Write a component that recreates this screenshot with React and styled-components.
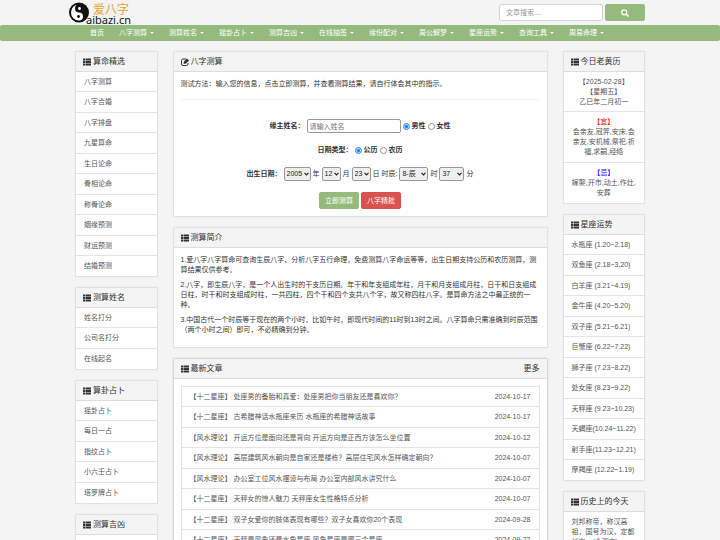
import React from 'react';
import styled, { createGlobalStyle } from 'styled-components';

const GlobalStyle = createGlobalStyle`
* {
  box-sizing: border-box;
}
body {
  margin: 0;
  background: #f4f4f4;
  color: #333;
  font-family: "Liberation Sans", "Noto Sans CJK SC", sans-serif;
  font-size: 7px;
  line-height: 10px;
}
a {
  color: inherit;
  text-decoration: none;
}
ul {
  margin: 0;
  padding: 0;
  list-style: none;
}
input, select, button {
  margin: 0;
  font: inherit;
  color: inherit;
}
`

const Container = styled.div`
  max-width: 570px;
  margin: 0 auto;
`

const TopBar = styled(Container)`
  display: flex;
  align-items: flex-start;
  justify-content: space-between;
  height: 25px;
`

const Logo = styled.a`
  display: block;
  margin-left: -8px;
  svg {
    display: block;
    overflow: visible;
  }
`

const Search = styled.form`
  display: grid;
  grid-template-columns: 104px 40px;
  gap: 2px;
  padding-top: 4px;
`

const SearchInput = styled.input`
  width: 100%;
  height: 17px;
  padding: 0 6px;
  border: 1px solid #d4d4d4;
  border-radius: 2px;
  background: #fff;
  &::placeholder {
    color: #999;
  }
`

const Button = styled.button`
  display: inline-flex;
  align-items: center;
  justify-content: center;
  width: 40px;
  height: 17px;
  padding: 0;
  border: 1px solid ${props => props.$danger ? '#d6504c' : '#94ba7d'};
  border-radius: 2px;
  background: ${props => props.$danger ? '#d9534f' : '#94ba7d'};
  color: #fff;
`

const Nav = styled.nav`
  background: #94ba7d;
  border-radius: 2px;
  color: #fff;
`

const Menu = styled.ul`
  display: flex;
  max-width: 570px;
  margin: 0 auto;
  padding: 0 7px;
`

const MenuLink = styled.a`
  display: flex;
  align-items: center;
  gap: 3px;
  height: 16px;
  padding: 0 7px 0 8px;
  white-space: nowrap;
`

const Caret = styled.span`
  border: 2px solid transparent;
  border-top-color: #fff;
  border-bottom: 0;
`

const Page = styled(Container)`
  display: grid;
  grid-template-columns: 11fr 50fr 11fr;
  align-items: start;
  gap: 15px;
  padding-top: 10px;
`

const Column = styled.div`
  display: grid;
  grid-template-columns: minmax(0, 1fr);
  gap: 10px;
`

const Box = styled.section`
  border: 1px solid ${props => props.$raised ? '#dadada' : '#e2e2e2'};
  border-radius: 2px;
  background: #fff;
  box-shadow: 0 0 ${props => props.$raised ? 2 : 1}px rgba(0, 0, 0, 0.15);
`

const Heading = styled.header`
  display: flex;
  align-items: center;
  gap: 2px;
  height: 20px;
  padding: 0 7px;
  border-bottom: 1px solid #ddd;
  background: #f4f4f4;
  font-size: 8px;
  h2 {
    margin: 0;
    font-size: 8px;
    font-weight: 400;
  }
  a {
    margin-left: auto;
  }
`

const Item = styled.li`
  display: flex;
  justify-content: space-between;
  padding: 5px 8px 4px;
  border-bottom: 1px solid #e4e4e4;
  color: #555;
  white-space: nowrap;
  &:nth-child(even) {
    padding-bottom: 5px;
  }
  &:last-child {
    border-bottom: 0;
    padding-bottom: 5px;
  }
`

const Note = styled(Item)`
  display: block;
  white-space: normal;
  text-align: ${props => props.$left ? 'left' : 'center'};
`

const Mark = styled.span`
  color: ${props => props.$color};
`

const Body = styled.div`
  padding: 7px;
  p {
    margin: 0 0 5px;
  }
`

const Articles = styled.ul`
  border: 1px solid #e4e4e4;
`

const Form = styled.form`
  display: grid;
  justify-items: center;
  margin-top: 10px;
  padding-top: 19px;
  border-top: 1px solid #f3f3f3;
`

const Line = styled.div`
  display: flex;
  align-items: center;
  gap: 2px;
  height: 14px;
  margin-bottom: 10px;
  white-space: nowrap;
`

const Label = styled.label`
  font-weight: 700;
`

const NameInput = styled.input`
  width: 94px;
  height: 14px;
  padding: 0 2px;
  border: 1px solid #999;
  border-radius: 2px;
  background: #fff;
  &::placeholder {
    color: #757575;
  }
`

const Radio = styled.input`
  appearance: none;
  width: 7px;
  height: 7px;
  border: 1px solid #959595;
  border-radius: 50%;
  background: #fff;
  &:checked {
    border-color: #4a9bff;
    background: #0075ff;
    box-shadow: inset 0 0 0 1px #cfe4ff;
  }
`

const Picker = styled.span`
  position: relative;
  display: block;
  width: ${props => props.$width}px;
  select {
    display: block;
    appearance: none;
    width: 100%;
    height: 14px;
    padding: 0 2px;
    border: 1px solid #999;
    border-radius: 2px;
    background: #efefef;
    color: #222;
  }
  svg {
    position: absolute;
    top: 5px;
    right: 2px;
    pointer-events: none;
  }
`

const Actions = styled.div`
  display: flex;
  gap: 2px;
  padding-top: 1px;
`

const menu = ['八字测算', '测算姓名', '摇卦占卜', '测算吉凶', '在线抽签', '缘份配对', '周公解梦', '星座运势', '查询工具', '周易命理'];

const leftLists = [
  { title: '算命精选', items: ['八字测算', '八字合婚', '八字排盘', '九星算命', '生日论命', '骨相论命', '称骨论命', '姻缘预测', '财运预测', '结婚预测'] },
  { title: '测算姓名', items: ['姓名打分', '公司名打分', '在线起名'] },
  { title: '算卦占卜', items: ['摇卦占卜', '每日一占', '指纹占卜', '小六壬占卜', '塔罗牌占卜'] },
  { title: '测算吉凶', items: ['手机号码吉凶', '车牌号码吉凶'] },
];

const signs = [
  '水瓶座 (1.20~2.18)', '双鱼座 (2.18~3.20)', '白羊座 (3.21~4.19)', '金牛座 (4.20~5.20)',
  '双子座 (5.21~6.21)', '巨蟹座 (6.22~7.22)', '狮子座 (7.23~8.22)', '处女座 (8.23~9.22)',
  '天秤座 (9.23~10.23)', '天蝎座(10.24~11.22)', '射手座(11.23~12.21)', '摩羯座 (12.22~1.19)',
];

const articles = [
  ['【十二星座】 处座男的备胎和真爱：处座男把你当朋友还是喜欢你？', '2024-10-17'],
  ['【十二星座】 古希腊神话水瓶座来历 水瓶座的希腊神话故事', '2024-10-17'],
  ['【风水理论】 开运方位是面向还是背向 开运方向是正西方该怎么坐位置', '2024-10-12'],
  ['【风水理论】 高层建筑风水朝向是自家还是楼栋？高层住宅风水怎样确定朝向？', '2024-10-07'],
  ['【风水理论】 办公室工位风水摆设与布局 办公室内部风水讲究什么', '2024-10-07'],
  ['【十二星座】 天秤女的惊人魅力 天秤座女生性格特点分析', '2024-10-07'],
  ['【十二星座】 双子女爱你的肢体表现有哪些？双子女喜欢你20个表现', '2024-09-28'],
  ['【十二星座】 天秤是风象还是水象星座 风象星座是哪三个星座', '2024-09-22'],
];

const ListIcon = () => (
  <svg width="8" height="8" viewBox="0 0 16 16" fill="currentColor" aria-hidden="true">
    <path d="M0 1h4v4H0zM5 1h11v4H5zM0 6h4v4H0zM5 6h11v4H5zM0 11h4v4H0zM5 11h11v4H5z" />
  </svg>
);

const EditIcon = () => (
  <svg width="8" height="8" viewBox="0 0 16 16" fill="none" stroke="currentColor" strokeWidth="2" aria-hidden="true">
    <path d="M10 2H4a3 3 0 0 0-3 3v7a3 3 0 0 0 3 3h7a3 3 0 0 0 3-3v-2" />
    <path d="M5 12l1-5 6-6 4 4-6 6z" fill="currentColor" stroke="none" />
  </svg>
);

const SearchIcon = () => (
  <svg width="8" height="8" viewBox="0 0 16 16" fill="none" stroke="currentColor" strokeWidth="2.500" aria-hidden="true">
    <circle cx="6.500" cy="6.500" r="5" />
    <path d="M10 10l5 5" strokeWidth="3.500" />
  </svg>
);

const LogoMark = () => (
  <svg width="66" height="25" viewBox="0 0 66 25">
    <circle cx="12" cy="12.500" r="10" fill="#111" />
    <path d="M12 4.500a8 8 0 0 0 0 16a4 4 0 0 0 0-8a4 4 0 0 1 0-8z" fill="#fff" />
    <circle cx="12.500" cy="8.500" r="1.400" fill="#fff" />
    <circle cx="11.500" cy="16.500" r="1.400" fill="#111" />
    <text x="26" y="14" fontSize="12" fill="#e3a32b" fontFamily="'Noto Sans CJK SC', sans-serif">爱八字</text>
    <text x="19" y="24" fontSize="11" fill="#111" fontFamily="'Noto Sans', sans-serif">aibazi.cn</text>
  </svg>
);

const Panel = ({ title, icon, more, raised, children }) => (
  <Box $raised={raised}>
    <Heading>
      {icon || <ListIcon />}
      <h2>{title}</h2>
      {more && <a href="#more">{more}</a>}
    </Heading>
    {children}
  </Box>
);

const LinkPanel = ({ title, items }) => (
  <Panel title={title}>
    <ul>
      {items.map(item => <Item key={item}><a href="#item">{item}</a></Item>)}
    </ul>
  </Panel>
);

const Select = ({ label, value, width }) => (
  <Picker $width={width}>
    <select aria-label={label} defaultValue={value}>
      <option>{value}</option>
    </select>
    <svg width="5" height="4" viewBox="0 0 5 4" fill="none" stroke="#222" strokeWidth="1.200">
      <path d="M.5 .8l2 2 2-2" />
    </svg>
  </Picker>
);

const BirthForm = () => (
  <Form onSubmit={e => e.preventDefault()}>
    <Line>
      <Label htmlFor="name">缘主姓名：</Label>
      <NameInput id="name" type="text" placeholder="请输入姓名" />
      <Radio id="male" type="radio" name="sex" defaultChecked />
      <Label htmlFor="male">男性</Label>
      <Radio id="female" type="radio" name="sex" />
      <Label htmlFor="female">女性</Label>
    </Line>
    <Line>
      <Label as="span">日期类型：</Label>
      <Radio id="solar" type="radio" name="calendar" defaultChecked />
      <Label htmlFor="solar">公历</Label>
      <Radio id="lunar" type="radio" name="calendar" />
      <Label htmlFor="lunar">农历</Label>
    </Line>
    <Line>
      <Label as="span">出生日期：</Label>
      <Select label="年" value="2005" width={27} /> 年
      <Select label="月" value="12" width={19} /> 月
      <Select label="日" value="23" width={19} /> 日 时辰:
      <Select label="时辰" value="8-辰" width={29} /> 时
      <Select label="分" value="37" width={25} /> 分
    </Line>
    <Actions>
      <Button type="submit">立即测算</Button>
      <Button type="button" $danger>八字精批</Button>
    </Actions>
  </Form>
);

export default function App() {
  return (
    <>
      <GlobalStyle />
      <TopBar as="header">
        <Logo href="#home" aria-label="爱八字"><LogoMark /></Logo>
        <Search onSubmit={e => e.preventDefault()}>
          <SearchInput type="text" aria-label="文章搜索" placeholder="文章搜索...." />
          <Button type="submit" aria-label="搜索"><SearchIcon /></Button>
        </Search>
      </TopBar>
      <Nav>
        <Menu>
          <li><MenuLink href="#home">首页</MenuLink></li>
          {menu.map(name => (
            <li key={name}><MenuLink href="#menu">{name}<Caret /></MenuLink></li>
          ))}
        </Menu>
      </Nav>
      <Page as="main">
        <Column>
          {leftLists.map(list => <LinkPanel key={list.title} {...list} />)}
        </Column>
        <Column>
          <Panel title="八字测算" icon={<EditIcon />}>
            <Body>
              测试方法：输入您的信息，点击立即测算，并查看测算结果，请自行体会其中的指示。
              <BirthForm />
            </Body>
          </Panel>
          <Panel title="测算简介">
            <Body>
              <p>1.爱八字八字算命可查询生辰八字、分析八字五行命理，免费测算八字命运等等，出生日期支持公历和农历测算，测算结果仅供参考。</p>
              <p>2.八字，即生辰八字，是一个人出生时的干支历日期。年干和年支组成年柱，月干和月支组成月柱，日干和日支组成日柱，时干和时支组成时柱，一共四柱，四个干和四个支共八个字，故又称四柱八字。是算命方法之中最正统的一种。</p>
              <p>3.中国古代一个时辰等于现在的两个小时，比如午时，即现代时间的11时到13时之间。八字算命只需准确到时辰范围（两个小时之间）即可，不必精确到分钟。</p>
            </Body>
          </Panel>
          <Panel title="最新文章" more="更多" raised>
            <Body>
              <Articles>
                {articles.map(([title, date]) => (
                  <Item key={title}><a href="#article">{title}</a><span>{date}</span></Item>
                ))}
              </Articles>
            </Body>
          </Panel>
        </Column>
        <Column>
          <Panel title="今日老黄历">
            <ul>
              <Note>【2025-02-28】<br />【星期五】<br />乙巳年二月初一</Note>
              <Note><Mark $color="#f00">【宜】</Mark><br />会亲友,冠笄,安床,会亲友,安机械,祭祀,祈福,求嗣,经络</Note>
              <Note><Mark $color="#00f">【忌】</Mark><br />嫁娶,开市,动土,作灶,安葬</Note>
            </ul>
          </Panel>
          <LinkPanel title="星座运势" items={signs} />
          <Panel title="历史上的今天">
            <ul>
              <Note $left>刘邦称帝，称汉高祖，国号为汉，定都长安。(今西安)</Note>
            </ul>
          </Panel>
        </Column>
      </Page>
    </>
  );
}
